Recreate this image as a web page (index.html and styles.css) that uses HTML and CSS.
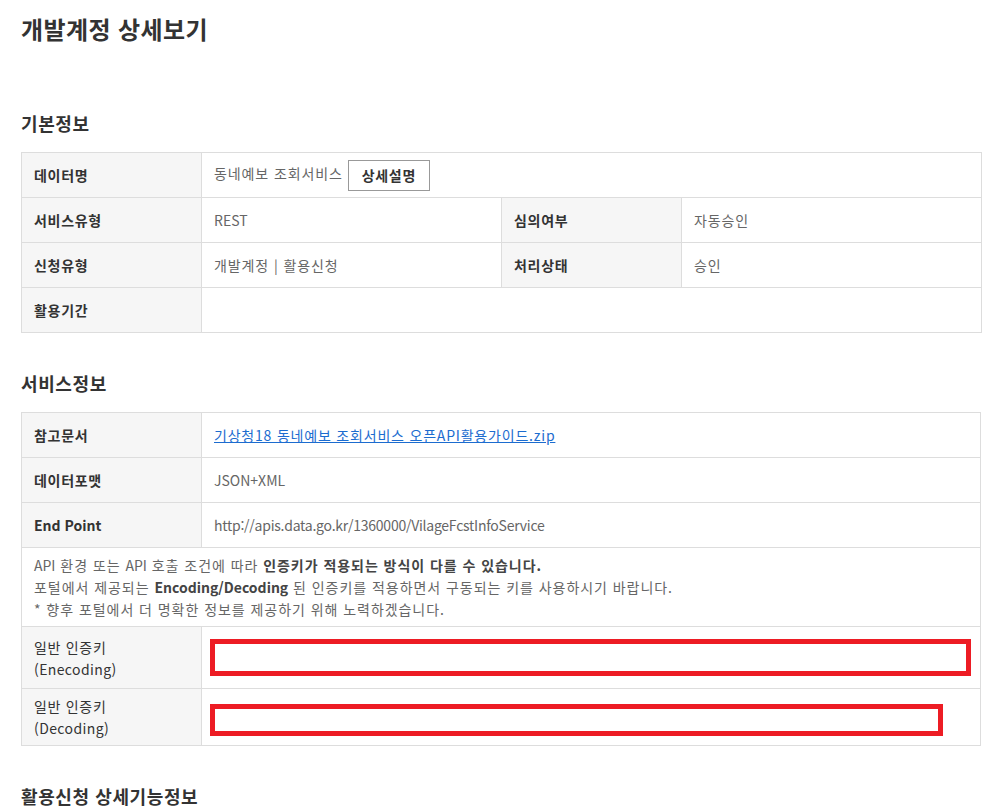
FILE: index.html
```html
<!DOCTYPE html>
<html lang="ko">

<head>
    <meta charset="UTF-8">
    <meta name="viewport" content="width=device-width, initial-scale=1.0">
    <title>개발계정 상세보기</title>
    <link rel="stylesheet" href="styles.css">
</head>

<body>
    <div class="page">
        <h1 class="page-title">개발계정 상세보기</h1>

        <!-- 기본정보 -->
        <h2 class="section-title first">기본정보</h2>
        <table class="info-table">
            <colgroup>
                <col class="col-label">
                <col class="col-value">
                <col class="col-label">
                <col class="col-value">
            </colgroup>
            <tr>
                <th>데이터명</th>
                <td colspan="3">동네예보 조회서비스 <button type="button" class="btn-detail">상세설명</button></td>
            </tr>
            <tr>
                <th>서비스유형</th>
                <td class="latin">REST</td>
                <th>심의여부</th>
                <td>자동승인</td>
            </tr>
            <tr>
                <th>신청유형</th>
                <td>개발계정 | 활용신청</td>
                <th>처리상태</th>
                <td>승인</td>
            </tr>
            <tr>
                <th>활용기간</th>
                <td colspan="3"></td>
            </tr>
        </table>

        <!-- 서비스정보 -->
        <h2 class="section-title">서비스정보</h2>
        <table class="info-table">
            <colgroup>
                <col class="col-label">
                <col>
            </colgroup>
            <tr>
                <th>참고문서</th>
                <td><a href="#" class="file-link">기상청18 동네예보 조회서비스 오픈API활용가이드.zip</a></td>
            </tr>
            <tr>
                <th>데이터포맷</th>
                <td class="latin">JSON+XML</td>
            </tr>
            <tr>
                <th class="latin">End Point</th>
                <td class="latin url">http://apis.data.go.kr/1360000/VilageFcstInfoService</td>
            </tr>
            <tr>
                <td colspan="2" class="notice">
                    <span class="latin">API</span> 환경 또는 <span class="latin">API</span> 호출 조건에 따라 <b>인증키가 적용되는 방식이 다를 수 있습니다.</b><br>
                    포털에서 제공되는 <b class="latin">Encoding/Decoding</b> 된 인증키를 적용하면서 구동되는 키를 사용하시기 바랍니다.<br>
                    * 향후 포털에서 더 명확한 정보를 제공하기 위해 노력하겠습니다.
                </td>
            </tr>
            <tr class="key-row enc">
                <th class="key-label">일반 인증키<br><span class="latin">(Enecoding)</span></th>
                <td><div class="key-mask wide"></div></td>
            </tr>
            <tr class="key-row dec">
                <th class="key-label">일반 인증키<br><span class="latin">(Decoding)</span></th>
                <td><div class="key-mask narrow"></div></td>
            </tr>
        </table>

        <h2 class="section-title">활용신청 상세기능정보</h2>
    </div>
</body>

</html>
```

FILE: styles.css
```css
* {
    box-sizing: border-box;
}

body {
    margin: 0;
    padding: 0;
    background-color: #fff;
    color: #333;
    font-family: "Noto Sans CJK KR", "Noto Sans", sans-serif;
    overflow: hidden;
}

.page {
    padding: 12px 0 0 21px;
    width: 981px;
}

.page-title {
    margin: 0;
    font-size: 24px;
    line-height: 34px;
    font-weight: 700;
    color: #333;
    letter-spacing: 0.4px;
}

.section-title {
    margin: 37px 0 16px;
    font-size: 18px;
    line-height: 26px;
    font-weight: 700;
    color: #333;
    letter-spacing: 0.6px;
}
.section-title.first {
    margin-top: 64px;
}

/* tables */
.info-table {
    width: 960px;
    border-collapse: collapse;
    table-layout: fixed;
    font-size: 14px;
}
.info-table .col-label {
    width: 180px;
}
.info-table .col-value {
    width: 300px;
}
.info-table th,
.info-table td {
    border: 1px solid #ddd;
    height: 45px;
    padding: 0 12px;
    text-align: left;
    vertical-align: middle;
    line-height: 20px;
}
.info-table th {
    background-color: #f6f6f6;
    color: #333;
    font-weight: 700;
    letter-spacing: 0.7px;
}
.info-table td {
    color: #666;
    font-weight: 400;
    letter-spacing: 0.9px;
}
.info-table .latin {
    letter-spacing: 0;
}
.info-table .url {
    letter-spacing: -0.25px;
}

.btn-detail {
    height: 31px;
    margin-left: 0;
    padding: 0 13px;
    background-color: #fff;
    border: 1px solid #999;
    color: #333;
    font-family: inherit;
    font-size: 14px;
    font-weight: 700;
    letter-spacing: 0.7px;
    vertical-align: middle;
}

.file-link {
    color: #1c6ccf;
    text-decoration: underline;
    letter-spacing: 0.8px;
}

.info-table td.notice {
    height: 79px;
    padding: 6px 12px;
    font-size: 14px;
    line-height: 22px;
    color: #666;
    letter-spacing: 0.95px;
}
.notice b {
    color: #444;
    font-weight: 700;
}

.info-table .key-label {
    font-size: 14px;
    font-weight: 400;
    line-height: 22px;
    color: #333;
    letter-spacing: 0.7px;
}
.key-label .latin {
    letter-spacing: 0.4px;
}
.key-row.enc th,
.key-row.enc td {
    height: 62px;
}
.key-row.dec th,
.key-row.dec td {
    height: 57px;
}
.key-row td {
    padding: 0 0 0 8px;
}
.key-row.dec td {
    vertical-align: top;
    padding-top: 15px;
}

/* red redaction boxes */
.key-mask {
    border: 5px solid #ed1c24;
    background-color: #fff;
}
.key-mask.wide {
    width: 761px;
    height: 37px;
}
.key-mask.narrow {
    width: 733px;
    height: 32px;
}
```
